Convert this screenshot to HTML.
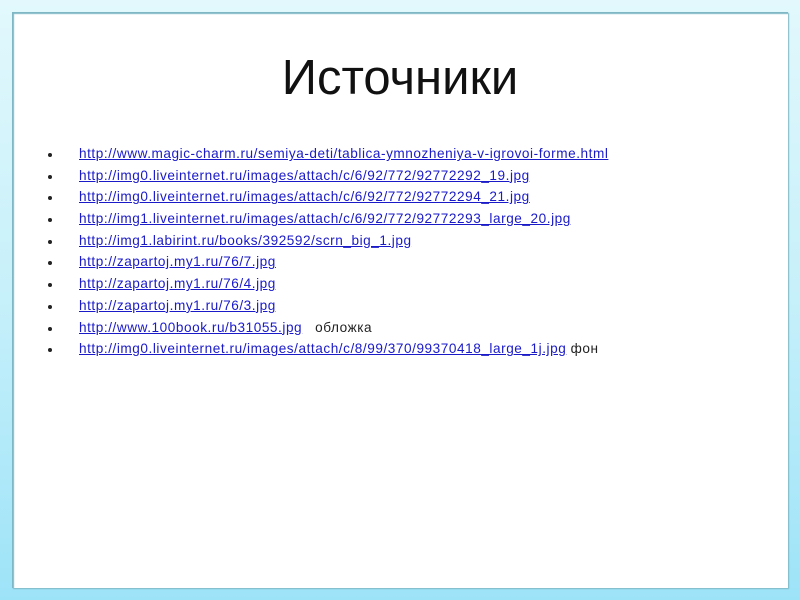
<!DOCTYPE html>
<html><head><meta charset="utf-8"><style>
html,body{margin:0;padding:0}
body{width:800px;height:600px;position:relative;overflow:hidden;background:linear-gradient(#e2f8fc,#c6f0fa 50%,#9de3f8);font-family:"Liberation Sans",sans-serif}
.in{position:absolute;left:12px;top:12px;width:776px;height:576px;background:#fff;box-shadow:inset 2px 2px 1px #7fb8c4, 1px 1px 1px #7fb8c4}
h1{position:absolute;left:0;width:800px;top:50px;margin:0;text-align:center;font-weight:normal;font-size:49px;color:#111}
ul{position:absolute;left:48px;top:143px;margin:0;padding:0;list-style:none}
li{height:21.7px;font-size:13.6px;line-height:21.7px;white-space:nowrap;position:relative;padding-left:31px;color:#222;letter-spacing:0.55px}
li:before{content:"";position:absolute;left:0;top:10px;width:4px;height:4px;background:#222;border-radius:50%}
a{color:#1a1ac8;text-decoration:underline}
</style></head><body>
<div class="in"></div>
<h1>Источники</h1>
<ul>
<li><a>http://www.magic-charm.ru/semiya-deti/tablica-ymnozheniya-v-igrovoi-forme.html</a></li>
<li><a>http://img0.liveinternet.ru/images/attach/c/6/92/772/92772292_19.jpg</a></li>
<li><a>http://img0.liveinternet.ru/images/attach/c/6/92/772/92772294_21.jpg</a></li>
<li><a>http://img1.liveinternet.ru/images/attach/c/6/92/772/92772293_large_20.jpg</a></li>
<li><a>http://img1.labirint.ru/books/392592/scrn_big_1.jpg</a></li>
<li><a>http://zapartoj.my1.ru/76/7.jpg</a></li>
<li><a>http://zapartoj.my1.ru/76/4.jpg</a></li>
<li><a>http://zapartoj.my1.ru/76/3.jpg</a></li>
<li><a>http://www.100book.ru/b31055.jpg</a> &nbsp; обложка</li>
<li><a>http://img0.liveinternet.ru/images/attach/c/8/99/370/99370418_large_1j.jpg</a> фон</li>
</ul>
</body></html>
